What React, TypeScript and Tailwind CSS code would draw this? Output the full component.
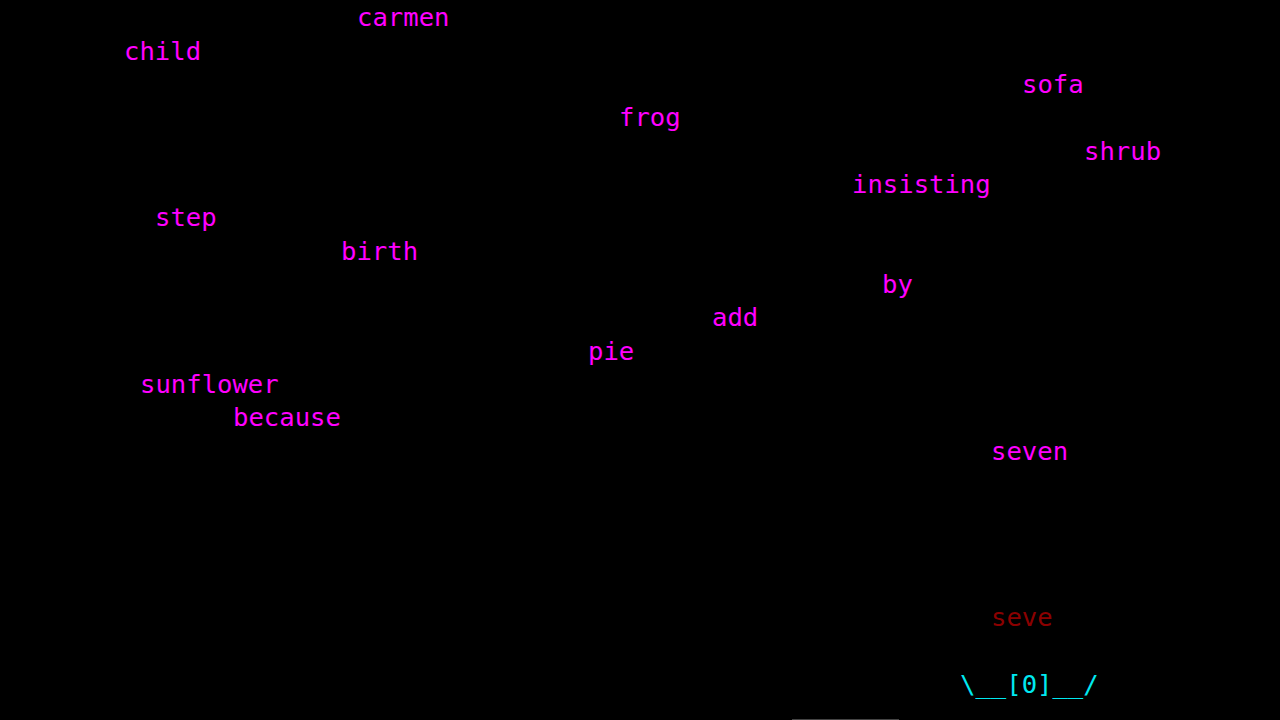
import React from "react";

type Word = { text: string; x: number; y: number };

// falling words, placed on the play field by their coordinates
const words: Word[] = [
  { text: "carmen", x: 357, y: 1 },
  { text: "child", x: 124, y: 35 },
  { text: "sofa", x: 1022, y: 68 },
  { text: "frog", x: 619, y: 101 },
  { text: "shrub", x: 1084, y: 135 },
  { text: "insisting", x: 852, y: 168 },
  { text: "step", x: 155, y: 201 },
  { text: "birth", x: 341, y: 235 },
  { text: "by", x: 882, y: 268 },
  { text: "add", x: 712, y: 301 },
  { text: "pie", x: 588, y: 335 },
  { text: "sunflower", x: 140, y: 368 },
  { text: "because", x: 233, y: 401 },
  { text: "seven", x: 991, y: 435 },
];

const App: React.FC = () => {
  return (
    <div className="relative h-[720px] w-[1280px] overflow-hidden bg-black font-['DejaVu_Sans_Mono',monospace] text-[25.6px] leading-[33.33px]">
      {words.map((w) => (
        <div
          key={w.text}
          className="absolute whitespace-pre text-[#ff00ff]"
          style={{ left: w.x, top: w.y }}
        >
          {w.text}
        </div>
      ))}

      {/* typed input */}
      <div className="absolute left-[991px] top-[601px] whitespace-pre text-[#8b0000]">seve</div>

      {/* player ship */}
      <div className="absolute left-[960px] top-[668px] whitespace-pre text-[#00e8f0]">{"\\__[0]__/"}</div>

      <div className="absolute bottom-0 left-[792px] h-px w-[107px] bg-[#444444]" />
    </div>
  );
};

export default App;
